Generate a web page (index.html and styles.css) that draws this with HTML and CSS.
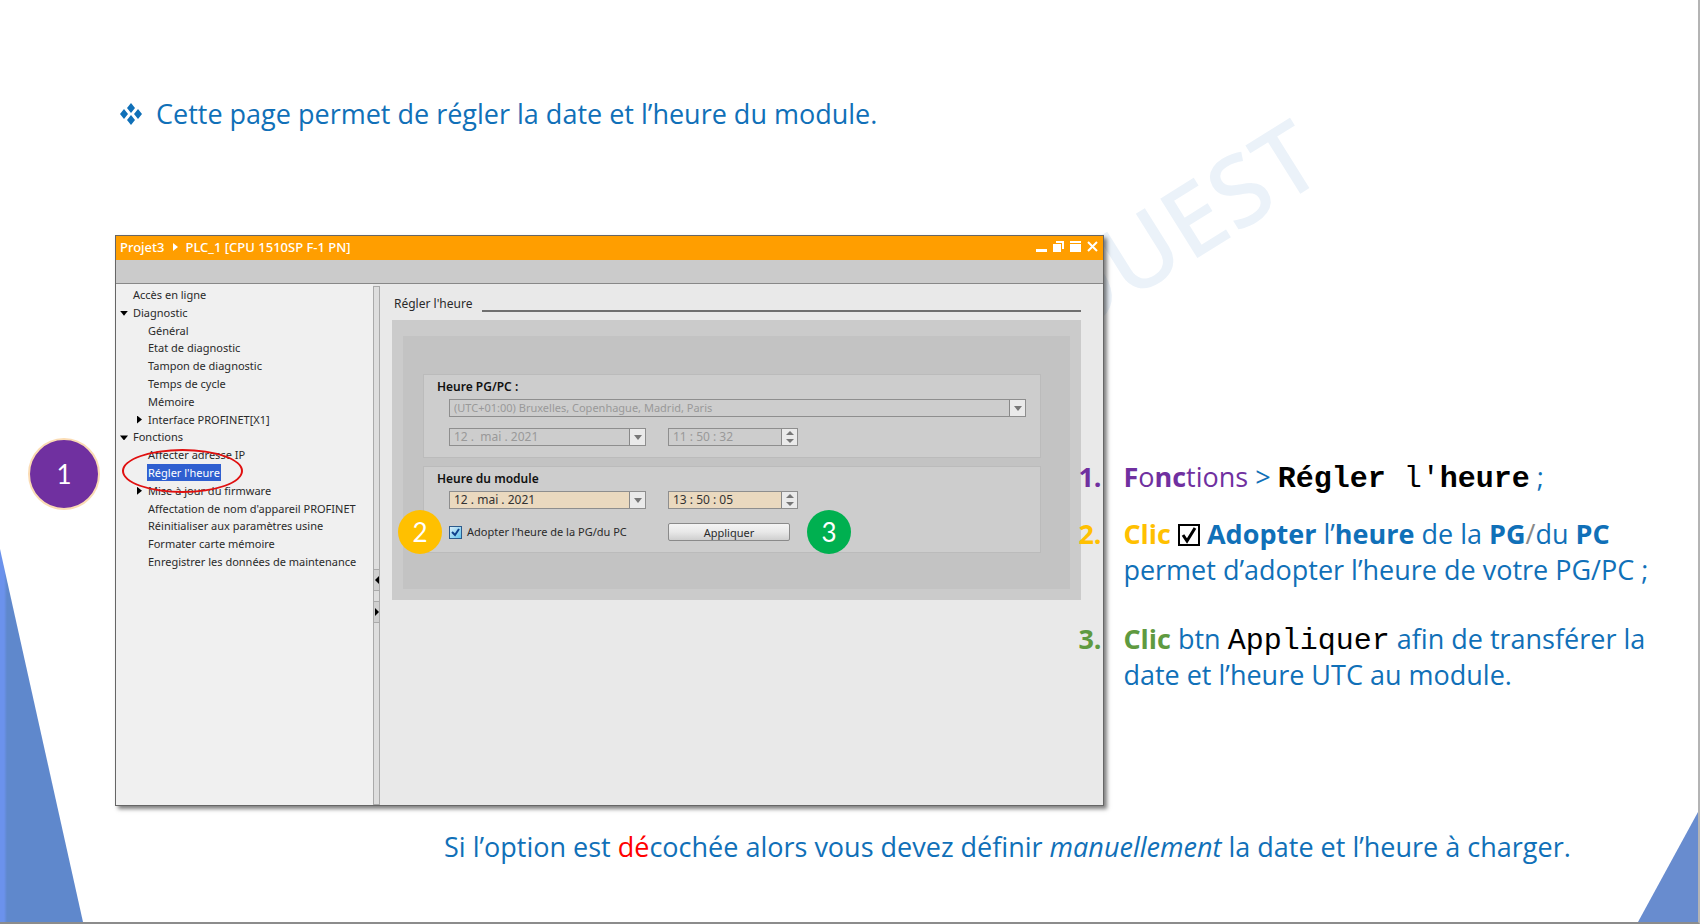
FILE: index.html
```
<!DOCTYPE html>
<html lang="fr">
<head>
    <meta charset="UTF-8">
    <meta name="viewport" content="width=device-width, initial-scale=1.0">
    <title>Régler l'heure</title>
    <link rel="stylesheet" href="styles.css">
</head>
<body>

    <div class="slide">
        <div class="corner corner-left"></div>
        <div class="corner corner-right"></div>
        <div class="watermark">OUEST</div>

        <ul class="intro">
            <li>
                <svg class="bullet" viewBox="0 0 22 22" width="22" height="22">
                    <path d="M11 0l4 5-4 5-4-5zM11 12l4 5-4 5-4-5zM4 6l4 5-4 5-4-5zM18 6l4 5-4 5-4-5z"/>
                </svg>
                Cette page permet de régler la date et l’heure du module.
            </li>
        </ul>

        <main class="content">
            <section class="window">
                <header class="titlebar">
                    <span>Projet3</span>
                    <svg class="crumb" viewBox="0 0 5 8" width="5" height="8"><path d="M0 0l5 4-5 4z"/></svg>
                    <span>PLC_1 [CPU 1510SP F-1 PN]</span>
                    <div class="window-buttons">
                        <button aria-label="Réduire"><svg viewBox="0 0 11 11" width="11" height="11"><path d="M0 8h11v3H0z"/></svg></button>
                        <button aria-label="Restaurer"><svg viewBox="0 0 11 11" width="11" height="11"><path d="M0 3h8v8H0zM3 0h8v8H9V2H3z"/></svg></button>
                        <button aria-label="Agrandir"><svg viewBox="0 0 11 11" width="11" height="11"><path d="M0 0h11v2H0zM0 3h11v8H0z"/></svg></button>
                        <button aria-label="Fermer"><svg viewBox="0 0 11 11" width="11" height="11"><path class="line" d="M1 1l9 9M10 1l-9 9"/></svg></button>
                    </div>
                </header>
                <div class="toolbar"></div>

                <div class="panes">
                    <nav>
                        <div class="tree">
                            <a href="#" class="level-1">Accès en ligne</a>
                            <a href="#" class="level-1 open">Diagnostic</a>
                            <a href="#">Général</a>
                            <a href="#">Etat de diagnostic</a>
                            <a href="#">Tampon de diagnostic</a>
                            <a href="#">Temps de cycle</a>
                            <a href="#">Mémoire</a>
                            <a href="#" class="closed">Interface PROFINET[X1]</a>
                            <a href="#" class="level-1 open">Fonctions</a>
                            <a href="#">Affecter adresse IP</a>
                            <a href="#" class="selected"><span>Régler l'heure</span></a>
                            <a href="#" class="closed">Mise à jour du firmware</a>
                            <a href="#">Affectation de nom d'appareil PROFINET</a>
                            <a href="#">Réinitialiser aux paramètres usine</a>
                            <a href="#">Formater carte mémoire</a>
                            <a href="#">Enregistrer les données de maintenance</a>
                        </div>
                    </nav>

                    <div class="splitter">
                        <button aria-label="Replier"><svg viewBox="0 0 4 8" width="4" height="8"><path d="M4 0v8L0 4z"/></svg></button>
                        <button aria-label="Déplier"><svg viewBox="0 0 4 8" width="4" height="8"><path d="M0 0v8l4-4z"/></svg></button>
                    </div>

                    <div class="editor">
                        <h1>Régler l'heure</h1>
                        <div class="frame">
                            <div class="frame-inner">
                                <section class="group">
                                    <h2>Heure PG/PC :</h2>
                                    <div class="field zone">
                                        <select aria-label="Fuseau horaire" disabled>
                                            <option>(UTC+01:00) Bruxelles, Copenhague, Madrid, Paris</option>
                                        </select>
                                        <span class="handle"><svg viewBox="0 0 8 5" width="8" height="5"><path d="M0 0h8L4 5z"/></svg></span>
                                    </div>
                                    <div class="row">
                                        <div class="field date">
                                            <input type="text" aria-label="Date PG/PC" value="12 .  mai . 2021" disabled>
                                            <button class="handle" aria-label="Choisir la date" disabled><svg viewBox="0 0 8 5" width="8" height="5"><path d="M0 0h8L4 5z"/></svg></button>
                                        </div>
                                        <div class="field time">
                                            <input type="text" aria-label="Heure PG/PC" value="11 : 50 : 32" disabled>
                                            <button class="handle" aria-label="Changer l'heure" disabled><svg viewBox="0 0 8 12" width="8" height="12"><path d="M0 4h8L4 0zM0 8h8l-4 4z"/></svg></button>
                                        </div>
                                    </div>
                                </section>

                                <section class="group">
                                    <h2>Heure du module</h2>
                                    <div class="row">
                                        <div class="field date editable">
                                            <input type="text" aria-label="Date du module" value="12 . mai . 2021">
                                            <button class="handle" aria-label="Choisir la date"><svg viewBox="0 0 8 5" width="8" height="5"><path d="M0 0h8L4 5z"/></svg></button>
                                        </div>
                                        <div class="field time editable">
                                            <input type="text" aria-label="Heure du module" value="13 : 50 : 05">
                                            <button class="handle" aria-label="Changer l'heure"><svg viewBox="0 0 8 12" width="8" height="12"><path d="M0 4h8L4 0zM0 8h8l-4 4z"/></svg></button>
                                        </div>
                                    </div>
                                    <div class="row actions">
                                        <label class="adopt">
                                            <input type="checkbox" checked>
                                            <svg class="tick" viewBox="0 0 9 9" width="9" height="9"><path d="M1 4l3 3 4-6"/></svg>
                                            Adopter l'heure de la PG/du PC
                                        </label>
                                        <button class="apply">Appliquer</button>
                                        <span class="badge badge-2">2</span>
                                        <span class="badge badge-3">3</span>
                                    </div>
                                </section>
                            </div>
                        </div>
                    </div>
                </div>

                <span class="ring"></span>
                <span class="badge badge-1">1</span>
            </section>

            <ol class="steps">
                <li class="purple">
                    <b class="num">1.</b>
                    <p><b>F</b>o<b>nc</b>tions <span class="blue">&gt;</span> <code><b>Régler</b> l'<b>heure</b></code><span class="blue"> ;</span></p>
                </li>
                <li class="yellow">
                    <b class="num">2.</b>
                    <p><b>Clic</b> <svg class="box" viewBox="0 0 22 22" width="22" height="22"><path class="edge" d="M1 1h20v20H1z"/><path class="check" d="M5 11l4 6 8-13"/></svg> <span class="blue"><b>Adopter</b> l’<b>heure</b> de la <b>PG</b><i class="slash">/</i>du <b>PC</b><br>permet d’adopter l’heure de votre PG/PC ;</span></p>
                </li>
                <li class="green">
                    <b class="num">3.</b>
                    <p><b>Clic</b> <span class="blue">btn <code>Appliquer</code> afin de transférer la<br>date et l’heure UTC au module.</span></p>
                </li>
            </ol>
        </main>

        <p class="note">Si l’option est <span class="red">dé</span>cochée alors vous devez définir <em>manuellement</em> la date et l’heure à charger.</p>
    </div>

</body>
</html>
```

FILE: styles.css
```
* {
    box-sizing: border-box;
}

body {
    margin: 0;
    background-color: #fff;
    color: #1070b8;
    font-family: "Open Sans", sans-serif;
    font-size: 27px;
    line-height: 36px;
}

button, input, select {
    font: inherit;
    color: inherit;
    border-radius: 0;
    margin: 0;
    padding: 0;
}

.slide {
    position: relative;
    z-index: 0;
    min-height: 100vh;
    padding: 96px 0 0 115px;
    overflow: hidden;
    border-right: 2px solid #b4b4b4;
    border-bottom: 2px solid #8c8c8c;
}

/* Décor */
.corner {
    position: absolute;
    bottom: 0;
    z-index: -1;
    background: #5f88cc;
}

.corner-left {
    left: 0;
    width: 83px;
    height: 373px;
    background: linear-gradient(to right, #6b92ec 4px, #5f88cc 7px);
    clip-path: polygon(0 0, 100% 100%, 0 100%);
}

.corner-right {
    right: 0;
    width: 60px;
    height: 110px;
    background: #688ccf;
    clip-path: polygon(100% 0, 100% 100%, 0 100%);
}

.watermark {
    position: absolute;
    left: 1019px;
    top: 183px;
    z-index: -1;
    font-family: "Noto Sans", sans-serif;
    font-weight: 500;
    font-size: 98px;
    line-height: 88px;
    color: #ebf2f9;
    transform: rotate(-32deg);
}

.intro {
    list-style: none;
    margin: 0;
    padding: 0 0 0 5px;
}

.intro li {
    display: flex;
    align-items: center;
    gap: 14px;
}

.bullet {
    fill: #1070b8;
}

.content {
    display: grid;
    grid-template-columns: 5fr 3fr;
    margin-top: 103px;
}

/* Fenêtre */
.window {
    position: relative;
    display: flex;
    flex-direction: column;
    min-height: 571px;
    border: 1px solid #666;
    background: #e9e9e9;
    box-shadow: 3px 3px 4px rgba(0, 0, 0, 0.5);
    color: #2a2a2a;
    font-family: "Noto Sans", sans-serif;
    font-size: 11px;
    line-height: 18px;
}

.titlebar {
    display: flex;
    align-items: center;
    gap: 8px;
    height: 24px;
    padding: 0 5px 3px 4px;
    background: #ff9e00;
    color: #fff;
    font-size: 13px;
    font-weight: 500;
}

.crumb {
    fill: #fff;
}

.window-buttons {
    display: flex;
    gap: 6px;
    margin-left: auto;
}

.window-buttons button {
    display: flex;
    border: none;
    background: none;
}

.window-buttons svg {
    fill: #fff;
}

.window-buttons .line {
    stroke: #fff;
    stroke-width: 2;
}

.toolbar {
    height: 24px;
    background: #cbcbcb;
    border-bottom: 1px solid #888;
}

.panes {
    flex: 1;
    display: grid;
    grid-template-columns: 257px 7px 1fr;
}

.panes nav {
    padding-top: 2px;
    background: #f0f0f0;
}

.tree {
    display: flex;
    flex-direction: column;
    justify-content: space-between;
    min-height: 284px;
    line-height: 17px;
}

.tree a {
    position: relative;
    padding-left: 32px;
    color: inherit;
    text-decoration: none;
    white-space: nowrap;
}

.tree .level-1 {
    padding-left: 17px;
}

.open::before,
.closed::before {
    content: "";
    position: absolute;
    background: #000;
}

.open::before {
    left: 4px;
    top: 7px;
    width: 8px;
    height: 5px;
    clip-path: polygon(0 0, 100% 0, 50% 100%);
}

.closed::before {
    left: 21px;
    top: 5px;
    width: 5px;
    height: 8px;
    clip-path: polygon(0 0, 100% 50%, 0 100%);
}

.selected span {
    display: inline-block;
    margin-left: -1px;
    padding: 0 1px;
    background: #2f5fd0;
    color: #fff;
}

.splitter {
    display: flex;
    flex-direction: column;
    justify-content: center;
    gap: 10px;
    margin-top: 2px;
    padding-top: 100px;
    border: 1px solid #aaa;
    background: #dedede;
}

.splitter button {
    display: flex;
    align-items: center;
    justify-content: center;
    height: 22px;
    border: 1px solid #aaa;
    border-width: 1px 0;
    background: #d0d0d0;
}

.editor {
    padding: 12px 22px 0 12px;
}

h1 {
    display: flex;
    gap: 10px;
    margin: 0 0 8px;
    padding-left: 2px;
    font-size: 12px;
    line-height: 16px;
    font-weight: 400;
}

h1::after {
    content: "";
    flex: 1;
    height: 14px;
    border-bottom: 2px solid #707070;
}

.frame {
    padding: 16px 11px 11px;
    background: #cbcbcb;
}

.frame-inner {
    display: flex;
    flex-direction: column;
    gap: 8px;
    padding: 38px 29px 36px 20px;
    background: #c3c3c3;
}

.group {
    padding: 3px 14px 11px 25px;
    border: 1px solid #bbb;
    background: #cdcdcd;
}

h2 {
    margin: 0 0 3px -12px;
    color: #111;
    font-size: 12px;
    line-height: 18px;
    font-weight: 600;
}

.row {
    display: flex;
    gap: 22px;
}

.field {
    display: flex;
    height: 18px;
    border: 1px solid #8e8e8e;
    color: #999;
}

.zone {
    margin-bottom: 11px;
}

.date {
    width: 197px;
}

.time {
    width: 130px;
}

.editable {
    background: #ead9bf;
    color: #333;
}

.field input,
.field select {
    flex: 1;
    min-width: 0;
    padding-left: 4px;
    border: none;
    background: none;
    color: inherit;
    line-height: 16px;
    white-space: pre;
    opacity: 1;
    appearance: none;
}

.field input {
    font-size: 12px;
}

.handle {
    display: flex;
    align-items: center;
    justify-content: center;
    width: 16px;
    border: none;
    border-left: 1px solid #888;
    background: #eaeaea;
}

.handle svg {
    fill: #777;
}

.actions {
    position: relative;
    margin-top: 14px;
}

.adopt {
    position: relative;
    display: flex;
    align-items: center;
    gap: 5px;
    width: 197px;
    height: 18px;
    white-space: nowrap;
}

.adopt input {
    width: 13px;
    height: 13px;
    border: 1px solid #2c5a8c;
    background: linear-gradient(135deg, #d8ecf8, #62c4ee);
    appearance: none;
}

.tick {
    position: absolute;
    left: 2px;
    top: 5px;
    fill: none;
    stroke: #10408c;
    stroke-width: 2;
}

.apply {
    width: 122px;
    height: 18px;
    border: 1px solid #8a8a8a;
    border-radius: 2px;
    background: linear-gradient(#f4f4f4, #e8e8e8 50%, #cfcfcf);
}

/* Repères numérotés */
.badge {
    position: absolute;
    display: flex;
    align-items: center;
    justify-content: center;
    width: 44px;
    height: 44px;
    border-radius: 50%;
    color: #fff;
    font-family: Lato, sans-serif;
    font-size: 26px;
}

.badge-1 {
    left: -88px;
    top: 202px;
    width: 72px;
    height: 72px;
    border: 2px solid #fbdcb4;
    background: #7030a0;
}

.badge-2 {
    left: -51px;
    top: -13px;
    background: #ffc000;
}

.badge-3 {
    left: 358px;
    top: -13px;
    background: #00b050;
}

.ring {
    position: absolute;
    left: 6px;
    top: 213px;
    width: 121px;
    height: 44px;
    border: 2px solid #e01010;
    border-radius: 50%;
}

/* Étapes */
.steps {
    position: relative;
    list-style: none;
    margin: 224px 0 0 -26px;
    padding: 0;
    white-space: nowrap;
}

.steps li {
    display: grid;
    grid-template-columns: 45px 1fr;
    margin-bottom: 21px;
}

.steps .yellow {
    margin-bottom: 33px;
}

.steps p {
    margin: 0;
}

.steps code {
    font-family: "Liberation Mono", monospace;
    font-size: 30px;
    line-height: 30px;
    color: #000;
}

.box {
    vertical-align: -2px;
    fill: none;
    stroke: #000;
    stroke-width: 2;
}

.box .check {
    stroke-width: 3;
}

.purple {
    color: #7030a0;
}

.yellow {
    color: #ffc000;
}

.green {
    color: #5f9a40;
}

.blue {
    color: #1070b8;
}

.red {
    color: #f00;
}

.slash {
    color: #888;
    font-style: normal;
}

.note {
    margin: 23px 0 0 329px;
    white-space: nowrap;
}
```
